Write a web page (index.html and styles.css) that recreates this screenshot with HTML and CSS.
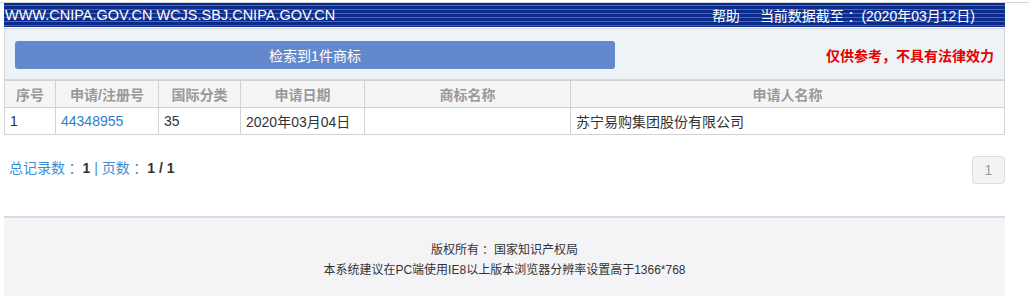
FILE: index.html
```html
<!DOCTYPE html>
<html lang="zh-CN">
  <head>
    <meta charset="UTF-8" />
    <title>商标检索结果</title>
    <link rel="stylesheet" href="styles.css">
  </head>
  <body>
    <div class="topline"></div>
    <div class="page">
      <div class="header">
        <span class="sites">WWW.CNIPA.GOV.CN WCJS.SBJ.CNIPA.GOV.CN</span>
        <span class="info"><a href="#">帮助</a>当前数据截至<span class="colon">：</span>(2020年03月12日)</span>
      </div>

      <div class="panel">
        <button class="count">检索到1件商标</button>
        <span class="warn">仅供参考，不具有法律效力</span>
      </div>

      <table class="result">
        <thead>
          <tr>
            <th class="c-no">序号</th>
            <th class="c-reg">申请/注册号</th>
            <th class="c-cls">国际分类</th>
            <th class="c-date">申请日期</th>
            <th class="c-name">商标名称</th>
            <th>申请人名称</th>
          </tr>
        </thead>
        <tbody>
          <tr>
            <td>1</td>
            <td><a href="#">44348955</a></td>
            <td>35</td>
            <td>2020年03月04日</td>
            <td></td>
            <td>苏宁易购集团股份有限公司</td>
          </tr>
        </tbody>
      </table>

      <div class="pager">
        <span class="total">总记录数<span class="colon">：</span><b>1</b> | 页数<span class="colon">：</span><b>1 / 1</b></span>
        <span class="pagenum">1</span>
      </div>

      <div class="footer">
        <p>版权所有<span class="colon">：</span>国家知识产权局</p>
        <p>本系统建议在PC端使用IE8以上版本浏览器分辨率设置高于1366*768</p>
      </div>
    </div>
  </body>
</html>
```

FILE: styles.css
```css
body {
  margin: 0;
  padding-top: 2px;
  font-family: "Liberation Sans", "Noto Sans CJK SC", sans-serif;
  font-size: 14px;
  color: #333;
  background: #fff;
}

/* centre the full-width colon like the original page */
.colon {
  margin-left: 0.25em;
}

.topline {
  border-top: 1px solid #d4d4d4;
}

.page {
  width: 1001px;
  margin-left: 4px;
}

.header {
  height: 24px;
  display: flex;
  justify-content: space-between;
  align-items: center;
  padding: 0 30px 0 1px;
  color: #fff;
  font-size: 14px;
  background: repeating-linear-gradient(
    to bottom,
    #0b2c8c 0,
    #0b2c8c 2px,
    #4867b5 2px,
    #4867b5 3px,
    #0b2c8c 3px,
    #0b2c8c 4px
  );
}

.sites {
  font-size: 14.5px;
}

.info a {
  color: #fff;
  text-decoration: none;
  margin-right: 20px;
}

.panel {
  height: 50px;
  margin-top: 1px;
  display: flex;
  align-items: center;
  justify-content: space-between;
  padding: 0 10px;
  background: #eef3f8;
  border: 1px solid #d6d6d6;
}

.count {
  width: 600px;
  height: 28px;
  margin-top: 2px;
  border: none;
  border-radius: 3px;
  background: #6389cc;
  color: #fff;
  font-family: inherit;
  font-size: 14px;
}

.warn {
  color: #e60000;
  font-weight: bold;
  margin-top: 2px;
}

.result {
  width: 100%;
  border-collapse: collapse;
}

.result th,
.result td {
  border: 1px solid #d2d2d2;
  height: 26px;
  padding: 0 5px;
}

.result th {
  background: #f5f5f5;
  color: #999;
  font-weight: bold;
  text-align: center;
}

.result td {
  text-align: left;
}

.result a {
  color: #2a7fcb;
  text-decoration: none;
}

.c-no { width: 40px; }
.c-reg { width: 92px; }
.c-cls { width: 71px; }
.c-date { width: 113px; }
.c-name { width: 195px; }

.pager {
  display: flex;
  justify-content: space-between;
  align-items: flex-start;
  height: 60px;
  padding: 21px 0 0 5px;
}

.total {
  color: #3b8fd4;
  margin-top: 1px;
}

.total b {
  color: #333;
}

.pagenum {
  width: 31px;
  height: 26px;
  line-height: 26px;
  text-align: center;
  color: #999;
  background: #f3f3f3;
  border: 1px solid #ddd;
  border-radius: 4px;
}

.footer {
  height: 56px;
  padding-top: 22px;
  border-top: 2px solid #d6d9e8;
  background: #f4f4f7;
  text-align: center;
  font-size: 12px;
}

.footer p {
  margin: 0;
  line-height: 20px;
}
```
